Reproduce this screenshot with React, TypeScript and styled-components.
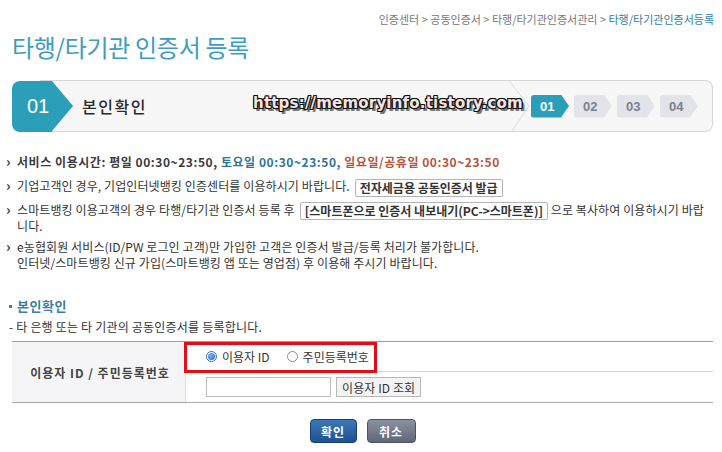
import React from 'react';
import styled, { createGlobalStyle } from 'styled-components';

const GlobalStyle = createGlobalStyle`
  body {
    margin: 0;
    background: #fff;
    font-family: "Noto Sans CJK KR", "Noto Sans", sans-serif;
    color: #333;
  }
`;

const Page = styled.div`
  width: 701px;
  padding: 0 9px 0 12px;
`;

const Breadcrumb = styled.div`
  display: flex;
  justify-content: flex-end;
  padding-top: 12px;
  margin-right: -1px;
  font-size: 11px;
  line-height: 14px;
  letter-spacing: 0;
  color: #777;
`;

const Crumb = styled.span<{ $current?: boolean }>`
  color: ${(p) => (p.$current ? '#2f7f9f' : '#777')};
  white-space: pre;
`;

const Title = styled.h1`
  margin: 6px 0 0;
  font-size: 24px;
  line-height: 30px;
  font-weight: 400;
  letter-spacing: -0.3px;
  color: #3e9dbd;
`;

const StepBar = styled.div`
  position: relative;
  display: flex;
  align-items: center;
  height: 52px;
  margin-top: 18px;
`;

const StepBadge = styled.div`
  position: relative;
  z-index: 1;
  flex: none;
  width: 40px;
  height: 51px;
  background: #2b9fba;
  border-radius: 8px 0 0 8px;
  color: #fff;
  font-family: "Liberation Sans", sans-serif;
  font-size: 20px;
  line-height: 51px;
  text-indent: 15px;

  &::after {
    content: '';
    position: absolute;
    top: 0;
    right: -21px;
    border-left: 21px solid #2b9fba;
    border-top: 25.5px solid transparent;
    border-bottom: 25.5px solid transparent;
  }
`;

const StepTrack = styled.div`
  flex: 1;
  display: flex;
  align-items: center;
  height: 50px;
  margin-left: -12px;
  padding-left: 42px;
  background: #f7f7f7;
  border: 1px solid #d6d6d8;
  border-left: none;
  border-radius: 0 8px 8px 0;
`;

const StepLabel = styled.div`
  font-size: 16px;
  font-weight: 500;
  letter-spacing: 1.5px;
  color: #2a2a2a;
`;

const Divider = styled.svg`
  position: absolute;
  left: 486px;
  top: 0;
`;

const Watermark = styled.div`
  position: absolute;
  left: 241px;
  top: 14px;
  font-family: "DejaVu Sans", sans-serif;
  font-weight: 700;
  font-size: 15px;
  letter-spacing: 0.2px;
  color: #f3e4e4;
  text-shadow: -1px 0 #111, 1px 0 #111, 0 -1px #111, 0 1px #111, -1px -1px #111,
    1px 1px #111, 1px -1px #111, -1px 1px #111, 2px 3px #777, 3px 3px #888;
`;

const Steps = styled.div`
  display: flex;
  gap: 5px;
  margin-left: auto;
  margin-right: 14px;
`;

const StepChip = styled.div<{ $active?: boolean }>`
  width: 38px;
  height: 23px;
  padding-left: 9px;
  box-sizing: border-box;
  border-radius: 3px;
  clip-path: polygon(0 0, 79% 0, 100% 50%, 79% 100%, 0 100%);
  background: ${(p) => (p.$active ? '#2b9fba' : '#e2e4ea')};
  color: ${(p) => (p.$active ? '#fff' : '#7b8090')};
  font-family: "Liberation Sans", sans-serif;
  font-weight: 700;
  font-size: 13px;
  line-height: 23px;
`;

const InfoList = styled.ul`
  list-style: none;
  margin: 22px 0 0;
  padding: 0;
  font-size: 12px;
  line-height: 16px;
  letter-spacing: 0.1px;
  color: #333;
`;

const InfoItem = styled.li<{ $gap?: number }>`
  position: relative;
  padding-left: 5px;
  margin-bottom: ${(p) => p.$gap ?? 7}px;
  white-space: nowrap;

  &::before {
    content: '›';
    position: absolute;
    left: -6px;
    top: -1px;
    font-weight: 700;
    font-size: 14px;
    color: #333;
  }
`;

const Hours = styled.span<{ $tone: 'dark' | 'blue' | 'red' }>`
  font-weight: 700;
  letter-spacing: 0.55px;
  color: ${(p) => (p.$tone === 'blue' ? '#2f7394' : p.$tone === 'red' ? '#b5553a' : '#3a3a3a')};
`;

const InlineBtn = styled.span`
  display: inline-block;
  margin: -2px 0 -2px 5px;
  padding: 0 4px;
  height: 18px;
  line-height: 16px;
  box-sizing: border-box;
  border: 1px solid #b4b4b4;
  border-radius: 2px;
  background: #fff;
  font-size: 12px;
  font-weight: 700;
  letter-spacing: 0;
  color: #333;
  vertical-align: middle;
`;

const SectionTitle = styled.h2`
  display: flex;
  align-items: center;
  gap: 5px;
  margin: 26px 0 0 -3px;
  font-size: 13px;
  line-height: 18px;
  font-weight: 700;
  letter-spacing: 0.5px;
  color: #3a7ea0;

  &::before {
    content: '';
    width: 3px;
    height: 3px;
    background: #3a7ea0;
  }
`;

const SectionDesc = styled.p`
  margin: 3px 0 0 -3px;
  font-size: 12px;
  line-height: 17px;
  letter-spacing: 0.2px;
  color: #333;
`;

const FormTable = styled.div`
  position: relative;
  display: grid;
  grid-template-columns: 174px 1fr;
  grid-template-rows: 30px 30px;
  margin-top: 6px;
  border-top: 1px solid #9c9c9c;
  border-bottom: 1px solid #a8a8a8;
`;

const HeadCell = styled.div`
  grid-row: 1 / span 2;
  display: flex;
  align-items: center;
  justify-content: center;
  padding-left: 3px;
  background: #f5f5f7;
  border-right: 1px solid #dedede;
  font-size: 12px;
  font-weight: 700;
  letter-spacing: 1px;
  color: #444;
`;

const FieldCell = styled.div<{ $last?: boolean }>`
  display: flex;
  align-items: center;
  gap: 5px;
  padding-left: 20px;
  border-bottom: ${(p) => (p.$last ? 'none' : '1px solid #d4d4d4')};
  font-size: 12px;
  color: #333;
`;

const RadioLabel = styled.label`
  display: flex;
  align-items: center;
  gap: 5px;
  margin-right: 12px;
  letter-spacing: 0;
`;

const RadioDot = styled.span<{ $checked?: boolean }>`
  position: relative;
  width: 11px;
  height: 11px;
  box-sizing: border-box;
  border-radius: 50%;
  border: 1px solid ${(p) => (p.$checked ? '#2e6fc4' : '#8d8d8d')};
  background: #fff;

  &::after {
    content: '';
    display: ${(p) => (p.$checked ? 'block' : 'none')};
    position: absolute;
    left: 1px;
    top: 1px;
    width: 7px;
    height: 7px;
    border-radius: 50%;
    background: radial-gradient(circle at 40% 35%, #7fb6f0, #1f66c8);
  }
`;

const TextField = styled.input`
  width: 125px;
  height: 20px;
  box-sizing: border-box;
  border: 1px solid #bdbdbd;
  padding: 0 4px;
`;

const LookupBtn = styled.button`
  height: 20px;
  padding: 0 5px;
  border: 1px solid #b8b8b8;
  border-radius: 0;
  background: #f3f3f3;
  font-family: "Noto Sans CJK KR", sans-serif;
  font-size: 12px;
  letter-spacing: 0.1px;
  color: #333;
`;

const Highlight = styled.div`
  position: absolute;
  left: 172px;
  top: 0;
  width: 193px;
  height: 31px;
  box-sizing: border-box;
  border: 3px solid #e30d17;
`;

const Actions = styled.div`
  display: flex;
  justify-content: center;
  gap: 10px;
  margin-top: 16px;
`;

const ActionBtn = styled.button<{ $variant: 'primary' | 'gray' }>`
  width: ${(p) => (p.$variant === 'primary' ? 47 : 49)}px;
  height: 24px;
  padding: 0;
  border-radius: 4px;
  border: 1px solid ${(p) => (p.$variant === 'primary' ? '#1b3f6e' : '#4b5262')};
  background: ${(p) =>
    p.$variant === 'primary'
      ? 'linear-gradient(#3a78b8, #1f528f)'
      : 'linear-gradient(#8a92a2, #5f6778)'};
  color: #fff;
  font-family: "Noto Sans CJK KR", sans-serif;
  font-size: 12px;
  font-weight: 700;
  letter-spacing: 1px;
`;

const crumbs = ['인증센터', '공동인증서', '타행/타기관인증서관리'];

export default function App() {
  return (
    <Page>
      <GlobalStyle />
      <Breadcrumb>
        {crumbs.map((c) => (
          <Crumb key={c}>{c} &gt; </Crumb>
        ))}
        <Crumb $current>타행/타기관인증서등록</Crumb>
      </Breadcrumb>

      <Title>타행/타기관 인증서 등록</Title>

      <StepBar>
        <StepBadge>01</StepBadge>
        <StepTrack>
          <StepLabel>본인확인</StepLabel>
          <Steps>
            <StepChip $active>01</StepChip>
            <StepChip>02</StepChip>
            <StepChip>03</StepChip>
            <StepChip>04</StepChip>
          </Steps>
        </StepTrack>
        <Divider width="40" height="52" viewBox="0 0 40 52">
          <path d="M11 1 L31 26 L14 51" fill="none" stroke="#dcdcdc" strokeWidth="1" />
        </Divider>
        <Watermark>https://memoryinfo.tistory.com</Watermark>
      </StepBar>

      <InfoList>
        <InfoItem $gap={8}>
          <Hours $tone="dark">서비스 이용시간: 평일 00:30~23:50, </Hours>
          <Hours $tone="blue">토요일 00:30~23:50, </Hours>
          <Hours $tone="red">일요일/공휴일 00:30~23:50</Hours>
        </InfoItem>
        <InfoItem $gap={7}>
          기업고객인 경우, 기업인터넷뱅킹 인증센터를 이용하시기 바랍니다.
          <InlineBtn>전자세금용 공동인증서 발급</InlineBtn>
        </InfoItem>
        <InfoItem $gap={5}>
          스마트뱅킹 이용고객의 경우 타행/타기관 인증서 등록 후
          <InlineBtn>[스마트폰으로 인증서 내보내기(PC-&gt;스마트폰)]</InlineBtn> 으로 복사하여 이용하시기 바랍
          <br />
          니다.
        </InfoItem>
        <InfoItem $gap={0}>
          e농협회원 서비스(ID/PW 로그인 고객)만 가입한 고객은 인증서 발급/등록 처리가 불가합니다.
          <br />
          인터넷/스마트뱅킹 신규 가입(스마트뱅킹 앱 또는 영업점) 후 이용해 주시기 바랍니다.
        </InfoItem>
      </InfoList>

      <SectionTitle>본인확인</SectionTitle>
      <SectionDesc>- 타 은행 또는 타 기관의 공동인증서를 등록합니다.</SectionDesc>

      <FormTable>
        <HeadCell>이용자 ID / 주민등록번호</HeadCell>
        <FieldCell>
          <RadioLabel>
            <RadioDot $checked />
            이용자 ID
          </RadioLabel>
          <RadioLabel>
            <RadioDot />
            주민등록번호
          </RadioLabel>
        </FieldCell>
        <FieldCell $last>
          <TextField type="text" />
          <LookupBtn>이용자 ID 조회</LookupBtn>
        </FieldCell>
        <Highlight />
      </FormTable>

      <Actions>
        <ActionBtn $variant="primary">확인</ActionBtn>
        <ActionBtn $variant="gray">취소</ActionBtn>
      </Actions>
    </Page>
  );
}
